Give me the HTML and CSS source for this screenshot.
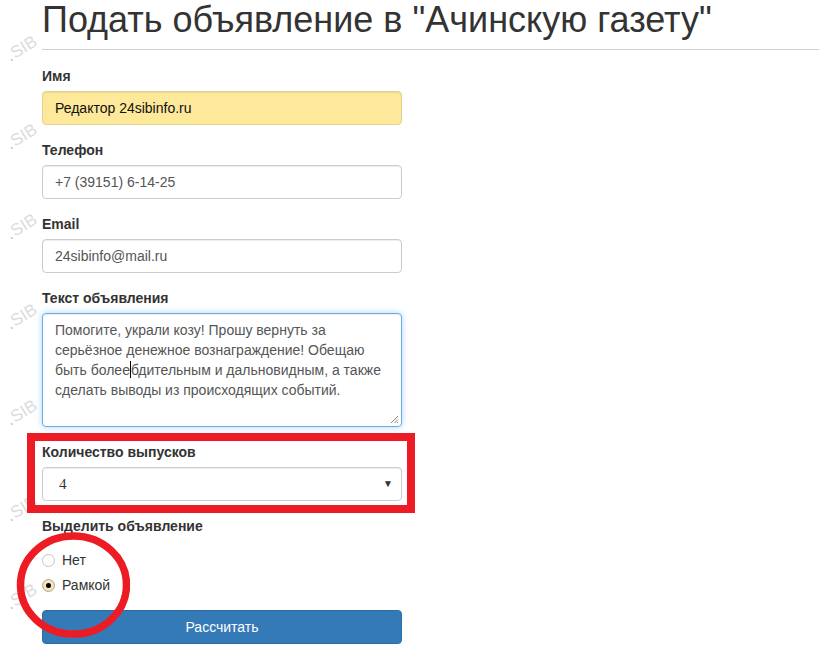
FILE: index.html
```html
<!DOCTYPE html>
<html lang="ru">
<head>
<meta charset="utf-8">
<title>Подать объявление</title>
<link rel="stylesheet" href="styles.css">
</head>
<body>
<div class="watermarks">
  <span class="wm wm1"><span class="dot">.</span>SIB</span>
  <span class="wm wm2"><span class="dot">.</span>SIB</span>
  <span class="wm wm3"><span class="dot">.</span>SIB</span>
  <span class="wm wm4"><span class="dot">.</span>SIB</span>
  <span class="wm wm5"><span class="dot">.</span>SIB</span>
  <span class="wm wm6"><span class="dot">.</span>SIB</span>
  <span class="wm wm7"><span class="dot">.</span>SIB</span>
</div>
<div class="container">
  <h1 class="page-header">Подать объявление в "Ачинскую газету"</h1>
  <form class="form">
    <div class="form-group">
      <label class="label">Имя</label>
      <div class="control autofill">Редактор 24sibinfo.ru</div>
    </div>
    <div class="form-group">
      <label class="label">Телефон</label>
      <div class="control">+7 (39151) 6-14-25</div>
    </div>
    <div class="form-group">
      <label class="label">Email</label>
      <div class="control">24sibinfo@mail.ru</div>
    </div>
    <div class="form-group">
      <label class="label">Текст объявления</label>
      <div class="control textarea">
        <div class="line">Помогите, украли козу! Прошу вернуть за</div>
        <div class="line">серьёзное денежное вознаграждение! Обещаю</div>
        <div class="line">быть более<span class="caret"></span>бдительным и дальновидным, а также</div>
        <div class="line">сделать выводы из происходящих событий.</div>
        <svg class="grip" width="9" height="9" viewBox="0 0 9 9"><path d="M8 1 L1 8 M8 4.5 L4.5 8 M8 7 L7 8" stroke="#888" stroke-width="1" fill="none"/></svg>
      </div>
    </div>
    <div class="form-group">
      <label class="label">Количество выпусков</label>
      <div class="control select"><span class="sel-val">4</span><span class="arrow">▼</span></div>
    </div>
    <div class="form-group radios">
      <label class="label">Выделить объявление</label>
      <div class="radio"><span class="rb"></span><span>Нет</span></div>
      <div class="radio"><span class="rb checked"></span><span>Рамкой</span></div>
    </div>
    <div class="btn">Рассчитать</div>
  </form>
</div>
<div class="mark-rect"></div>
<svg class="mark-ellipse" width="130" height="120" viewBox="0 0 130 120">
  <ellipse cx="73.5" cy="65" rx="53" ry="49" fill="none" stroke="#ed1c24" stroke-width="7.5"/>
</svg>
</body>
</html>
```
FILE: styles.css
```css
html, body {
  margin: 0;
  padding: 0;
  background: #fff;
}
body {
  font-family: "Liberation Sans", Arial, sans-serif;
  font-size: 14px;
  line-height: 20px;
  color: #333;
  width: 819px;
  height: 654px;
  overflow: hidden;
  position: relative;
}
.container {
  padding-left: 42px;
}
.page-header {
  margin: 0 0 16px 0;
  padding-bottom: 9px;
  border-bottom: 1px solid #d0d0d0;
  font-size: 36px;
  font-weight: normal;
  line-height: 40px;
  color: #333;
}
.form {
  width: 360px;
}
.form-group {
  margin-bottom: 15px;
}
.label {
  display: block;
  font-weight: bold;
  margin-bottom: 5px;
  height: 20px;
}
.control {
  box-sizing: border-box;
  height: 34px;
  padding: 6px 12px;
  border: 1px solid #ccc;
  border-radius: 4px;
  color: #555;
  background: #fff;
  box-shadow: inset 0 1px 1px rgba(0,0,0,0.075);
}
.autofill {
  background: #fee89a;
  border-color: #e2d294;
  color: #111;
}
.textarea {
  height: 114px;
  position: relative;
  border-color: #66afe9;
  box-shadow: inset 0 1px 1px rgba(0,0,0,0.075), 0 0 6px rgba(102,175,233,0.55);
}
.line {
  height: 20px;
  white-space: nowrap;
}
.caret {
  display: inline-block;
  width: 1px;
  height: 17px;
  background: #000;
  vertical-align: -3px;
}
.grip {
  position: absolute;
  right: 2px;
  bottom: 2px;
}
.select {
  display: flex;
  justify-content: space-between;
  align-items: center;
  padding: 6px 8px 6px 16px;
  background: #fff;
}
.sel-val {
  font-family: "Liberation Serif", "Times New Roman", serif;
  font-size: 15px;
  color: #333;
}
.arrow {
  font-size: 10px;
  color: #333;
}
.radios .label {
  margin-bottom: 14px;
}
.radio {
  display: flex;
  align-items: center;
  height: 20px;
  margin-bottom: 5px;
  color: #333;
}
.radio:last-child {
  margin-bottom: 0;
}
.rb {
  box-sizing: border-box;
  width: 13px;
  height: 13px;
  border-radius: 50%;
  border: 1px solid #c4c4c4;
  background: #fff;
  margin: 0 7px 0 0;
  position: relative;
}
.rb.checked {
  border-color: #b9a678;
  background: #f3e3bf;
}
.rb.checked::after {
  content: "";
  position: absolute;
  left: 3px;
  top: 3px;
  width: 5px;
  height: 5px;
  border-radius: 50%;
  background: #000;
}
.btn {
  box-sizing: border-box;
  height: 34px;
  border: 1px solid #2e6da4;
  border-radius: 4px;
  background: #337ab7;
  color: #fff;
  text-align: center;
  line-height: 32px;
}
.watermarks {
  position: absolute;
  left: 0;
  top: 0;
  width: 40px;
  height: 654px;
}
.wm {
  position: absolute;
  left: 5px;
  font-size: 17px;
  line-height: 18px;
  color: rgba(195,195,195,0.6);
  transform: rotate(-32deg);
  transform-origin: center center;
  white-space: nowrap;
}
.wm .dot {
  color: rgba(240,110,120,0.6);
  margin-right: 1px;
}
.wm1 { top: 40px; }
.wm2 { top: 128px; }
.wm3 { top: 218px; }
.wm4 { top: 308px; }
.wm5 { top: 404px; }
.wm6 { top: 500px; }
.wm7 { top: 588px; }
.mark-rect {
  position: absolute;
  left: 27px;
  top: 433px;
  width: 388px;
  height: 80px;
  box-sizing: border-box;
  border: 8px solid #ed1c24;
}
.mark-ellipse {
  position: absolute;
  left: 0;
  top: 520px;
}
```
